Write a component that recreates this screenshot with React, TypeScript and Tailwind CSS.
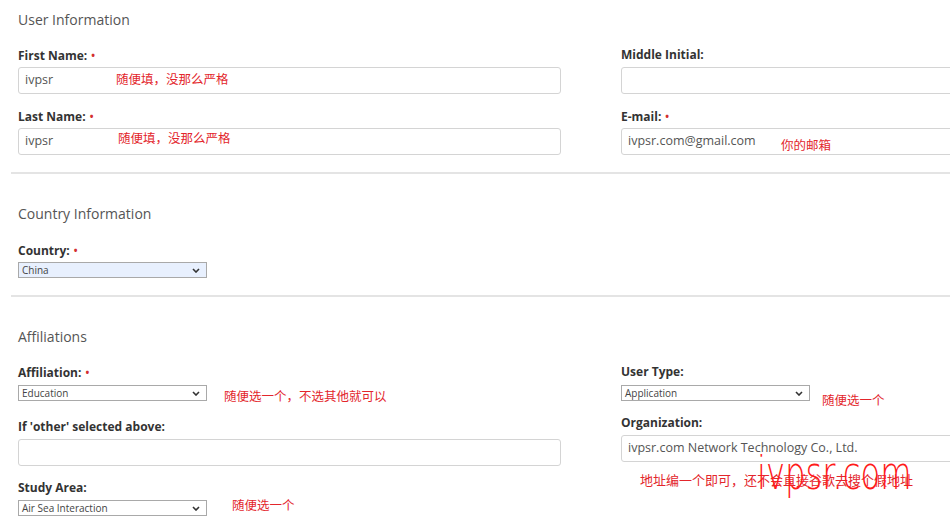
import React from "react";

const FONT = "font-['Open_Sans',_'Noto_Sans_CJK_SC',_sans-serif]";

function Label({ text, req }: { text: string; req?: boolean }) {
  return (
    <div className="h-[18px] leading-[18px] text-[12px] font-bold text-[#333]">
      {text}
      {req && <span className="ml-[4px] text-[10px] align-[1px] text-[#d32f2f]">•</span>}
    </div>
  );
}

function Note({ text, className, big }: { text: string; className: string; big?: boolean }) {
  return (
    <span
      className={
        "absolute whitespace-nowrap leading-[16px] text-[#e3262c] font-['Noto_Sans_CJK_SC',_sans-serif] " +
        (big ? "text-[13px] " : "text-[12.5px] ") +
        className
      }
    >
      {text}
    </span>
  );
}

function Input({ value, children }: { value?: string; children?: React.ReactNode }) {
  return (
    <div className="relative h-[27px] w-full border border-[#d4d4d4] rounded-[3px] bg-white pl-[6px] flex items-center text-[12.5px] text-[#555]">
      {value}
      {children}
    </div>
  );
}

function Select({ value, blue, children }: { value: string; blue?: boolean; children?: React.ReactNode }) {
  return (
    <div
      className={
        "relative h-[16px] w-[189px] border border-[#a9a9a9] flex items-center pl-[3px] pr-[6px] text-[10px] text-[#444] " +
        (blue ? "bg-[#e8f0fe]" : "bg-white")
      }
    >
      <span className="flex-1 leading-[14px]">{value}</span>
      <svg width="8" height="5" viewBox="0 0 8 5">
        <path d="M1 1 L4 4 L7 1" fill="none" stroke="#333" strokeWidth="1.6" />
      </svg>
      {children}
    </div>
  );
}

function Divider() {
  return <div className="ml-[11px] h-[2px] bg-[#e4e4e4] mt-[17px]" />;
}

function Heading({ text, className }: { text: string; className?: string }) {
  return <div className={"h-[20px] leading-[20px] text-[14px] text-[#555] pl-[18px] " + (className || "")}>{text}</div>;
}

export default function App() {
  return (
    <div className={"relative w-[950px] h-[530px] overflow-hidden bg-white " + FONT}>
      <Heading text="User Information" className="mt-[10px]" />
      <div className="flex gap-[60px] pl-[18px] mt-[16px]">
        <div className="w-[543px] shrink-0 flex flex-col">
          <Label text="First Name:" req />
          <div className="mt-[3px]">
            <Input value="ivpsr">
              <Note text="随便填，没那么严格" className="left-[97px] top-[3px]" />
            </Input>
          </div>
          <div className="mt-[13px]">
            <Label text="Last Name:" req />
          </div>
          <div className="mt-[3px]">
            <Input value="ivpsr">
              <Note text="随便填，没那么严格" className="left-[99px] top-[1px]" />
            </Input>
          </div>
        </div>
        <div className="w-[543px] shrink-0 flex flex-col">
          <Label text="Middle Initial:" />
          <div className="mt-[3px]">
            <Input />
          </div>
          <div className="mt-[13px]">
            <Label text="E-mail:" req />
          </div>
          <div className="mt-[3px]">
            <Input value="ivpsr.com@gmail.com">
              <Note text="你的邮箱" className="left-[159px] top-[8px]" />
            </Input>
          </div>
        </div>
      </div>
      <Divider />
      <Heading text="Country Information" className="mt-[30px]" />
      <div className="pl-[18px] mt-[17px]">
        <Label text="Country:" req />
        <div className="mt-[3px]">
          <Select value="China" blue />
        </div>
      </div>
      <Divider />
      <Heading text="Affiliations" className="mt-[30px]" />
      <div className="flex gap-[60px] pl-[18px] mt-[16px]">
        <div className="w-[543px] shrink-0 flex flex-col">
          <Label text="Affiliation:" req />
          <div className="mt-[4px]">
            <Select value="Education">
              <Note text="随便选一个，不选其他就可以" className="left-[205px] top-[2px]" />
            </Select>
          </div>
          <div className="mt-[17px]">
            <Label text="If 'other' selected above:" />
          </div>
          <div className="mt-[3px]">
            <Input />
          </div>
          <div className="mt-[13px]">
            <Label text="Study Area:" />
          </div>
          <div className="mt-[3px]">
            <Select value="Air Sea Interaction">
              <Note text="随便选一个" className="left-[213px] top-[-4px]" />
            </Select>
          </div>
        </div>
        <div className="w-[543px] shrink-0 flex flex-col">
          <Label text="User Type:" />
          <div className="mt-[4px]">
            <Select value="Application">
              <Note text="随便选一个" className="left-[200px] top-[6px]" />
            </Select>
          </div>
          <div className="mt-[13px]">
            <Label text="Organization:" />
          </div>
          <div className="mt-[3px] relative">
            <Input value="ivpsr.com Network Technology Co., Ltd." />
            <Note big text="地址编一个即可，还不会直接谷歌去搜个假地址" className="left-[19px] top-[37px]" />
          </div>
        </div>
      </div>
      <div className="absolute left-[757px] top-[450px] text-[46px] leading-none font-extralight text-[#ff1a1a] origin-left scale-x-[0.7] font-['DejaVu_Sans',_sans-serif] pointer-events-none">
        ivpsr.com
      </div>
    </div>
  );
}
